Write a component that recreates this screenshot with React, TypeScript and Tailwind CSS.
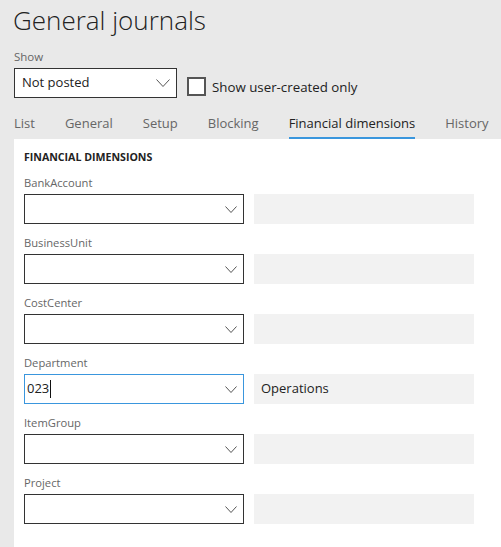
import React from "react";

const dims = [
  { label: "BankAccount", value: "", name: "" },
  { label: "BusinessUnit", value: "", name: "" },
  { label: "CostCenter", value: "", name: "" },
  { label: "Department", value: "023", name: "Operations", active: true },
  { label: "ItemGroup", value: "", name: "" },
  { label: "Project", value: "", name: "" },
];

const tabs = ["List", "General", "Setup", "Blocking", "Financial dimensions", "History"];

function Chevron({ w = 12, h = 7 }: { w?: number; h?: number }) {
  return (
    <svg width={w} height={h} viewBox={`0 0 ${w} ${h}`} className="shrink-0">
      <polyline
        points={`0.5,0.5 ${w / 2},${h - 0.5} ${w - 0.5},0.5`}
        fill="none"
        stroke="#555"
        strokeWidth="1"
      />
    </svg>
  );
}

export default function App() {
  return (
    <div className="flex h-[547px] w-[501px] flex-col overflow-hidden bg-[#e9e9e9] font-['Open_Sans',sans-serif]">
      <h1 className="pl-[13px] pt-[2px] text-[26px] font-light leading-[36px] text-[#222]">
        General journals
      </h1>

      <div className="mt-[11px] pl-[14px] text-[11.5px] leading-[16px] text-[#666]">Show</div>
      <div className="mt-[3px] flex items-start pl-[14px]">
        <div className="flex h-[30px] w-[163px] items-center justify-between border border-[#333] bg-white pl-[7px] pr-[6px]">
          <span className="text-[13px] text-[#222]">Not posted</span>
          <Chevron w={14} h={8} />
        </div>
        <div className="ml-[10px] mt-[9px] h-[19px] w-[19px] border-2 border-[#555] bg-white" />
        <span className="ml-[6px] mt-[9px] text-[13.3px] leading-[20px] text-[#222]">
          Show user-created only
        </span>
      </div>

      <div className="mt-[15px] flex gap-[30px] pl-[14px]">
        {tabs.map((t) => {
          const active = t === "Financial dimensions";
          return (
            <div
              key={t}
              className={`whitespace-nowrap border-b-2 pb-[4px] text-[13px] leading-[20px] ${
                active ? "border-[#3a96dd] text-[#222]" : "border-transparent text-[#666]"
              }`}
            >
              {t}
            </div>
          );
        })}
      </div>

      <div className="ml-[14px] flex-1 bg-white pl-[10px] pt-[10px]">
        <div className="text-[10.6px] font-bold leading-[16px] text-[#222]">FINANCIAL DIMENSIONS</div>
        {dims.map((d, i) => (
          <div key={d.label} className={i === 0 ? "mt-[10px]" : "mt-[11px]"}>
            <div className="text-[11.2px] leading-[16px] text-[#666]">{d.label}</div>
            <div className="mt-[3px] flex gap-[10px]">
              <div
                className={`flex h-[30px] w-[220px] items-center justify-between border pl-[2px] pr-[6px] ${
                  d.active ? "border-[#3a96dd]" : "border-[#333]"
                }`}
              >
                <span className="flex items-center text-[13px] text-[#222]">
                  {d.value}
                  {d.active && <span className="ml-[1px] inline-block h-[18px] w-px bg-[#111]" />}
                </span>
                <Chevron />
              </div>
              <div className="flex h-[30px] w-[220px] items-center bg-[#f2f2f2] pl-[7px] text-[13px] text-[#222]">
                {d.name}
              </div>
            </div>
          </div>
        ))}
      </div>
    </div>
  );
}
